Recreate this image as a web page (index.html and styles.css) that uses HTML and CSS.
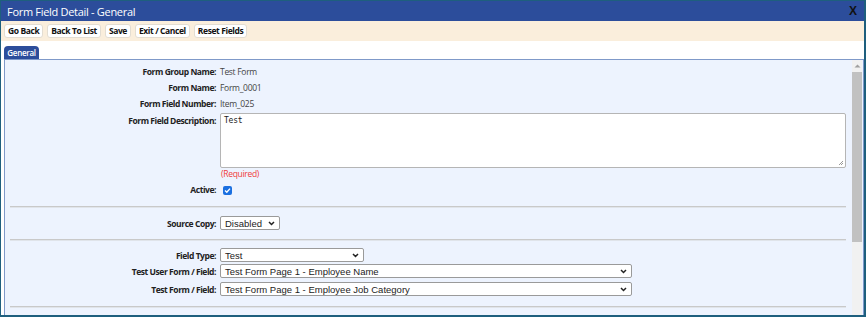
FILE: index.html
```html
<!DOCTYPE html>
<html>
<head>
<meta charset="utf-8">
<link rel="stylesheet" href="styles.css">
</head>
<body>
<div class="window">
  <div class="titlebar">
    <span class="title">Form Field Detail - General</span>
    <span class="close">X</span>
  </div>
  <div class="toolbar">
    <button class="btn">Go Back</button>
    <button class="btn">Back To List</button>
    <button class="btn">Save</button>
    <button class="btn">Exit / Cancel</button>
    <button class="btn">Reset Fields</button>
  </div>
  <div class="tabs">
    <span class="tab">General</span>
  </div>
  <div class="panel">
    <div class="content">
      <div class="row"><span class="label">Form Group Name:</span><span class="value">Test Form</span></div>
      <div class="row"><span class="label">Form Name:</span><span class="value">Form_0001</span></div>
      <div class="row"><span class="label">Form Field Number:</span><span class="value">Item_025</span></div>
      <div class="row row-top"><span class="label">Form Field Description:</span>
        <div class="value">
          <div class="textarea">Test<svg class="grip" width="6" height="6" viewBox="0 0 6 6"><path d="M5 1L1 5M5 3L3 5" stroke="#999" stroke-width="1"/></svg></div>
          <div class="required">(Required)</div>
        </div>
      </div>
      <div class="row row-active"><span class="label">Active:</span><span class="value"><span class="checkbox"><svg width="9" height="9" viewBox="0 0 9 9"><path d="M2 4.6L3.8 6.3L7 2.6" fill="none" stroke="#fff" stroke-width="1.4"/></svg></span></span></div>
      <div class="sep sep1"></div>
      <div class="row"><span class="label">Source Copy:</span><span class="value"><span class="select w-src">Disabled<svg class="chev" width="7" height="5" viewBox="0 0 7 5"><path d="M1 1L3.5 3.5L6 1" fill="none" stroke="#222" stroke-width="1.5"/></svg></span></span></div>
      <div class="sep sep2"></div>
      <div class="row"><span class="label">Field Type:</span><span class="value"><span class="select w-type">Test<svg class="chev" width="7" height="5" viewBox="0 0 7 5"><path d="M1 1L3.5 3.5L6 1" fill="none" stroke="#222" stroke-width="1.5"/></svg></span></span></div>
      <div class="row"><span class="label">Test User Form / Field:</span><span class="value"><span class="select w-long">Test Form Page 1 - Employee Name<svg class="chev" width="7" height="5" viewBox="0 0 7 5"><path d="M1 1L3.5 3.5L6 1" fill="none" stroke="#222" stroke-width="1.5"/></svg></span></span></div>
      <div class="row row-last"><span class="label">Test Form / Field:</span><span class="value"><span class="select w-long">Test Form Page 1 - Employee Job Category<svg class="chev" width="7" height="5" viewBox="0 0 7 5"><path d="M1 1L3.5 3.5L6 1" fill="none" stroke="#222" stroke-width="1.5"/></svg></span></span></div>
      <div class="sep sep3"></div>
    </div>
    <div class="scrollbar">
      <div class="arrow"><svg width="7" height="4" viewBox="0 0 7 4"><path d="M0.5 3.5L3.5 0.5L6.5 3.5Z" fill="#a0a0a0"/></svg></div>
      <div class="thumb"></div>
    </div>
  </div>
</div>
</body>
</html>
```
FILE: styles.css
```css
* { box-sizing: border-box; }
html, body { margin: 0; padding: 0; }
body {
  width: 866px;
  height: 317px;
  overflow: hidden;
  background: #ffffff;
  font-family: "Open Sans", "Noto Sans", sans-serif;
}
.window {
  width: 866px;
  height: 317px;
  border: 1px solid #1e5f7e;
  border-bottom-width: 2px;
  border-right-width: 2px;
  display: flex;
  flex-direction: column;
  overflow: hidden;
  background: #fff;
}
.titlebar {
  height: 20px;
  flex: none;
  background: #2c4d9b;
  display: flex;
  align-items: center;
  justify-content: space-between;
  padding: 0 7px 0 6px;
  color: #fff;
}
.title {
  font-size: 11px;
  letter-spacing: -0.3px;
}
.close {
  font-family: "Liberation Sans", sans-serif;
  font-weight: bold;
  color: #111;
  font-size: 12px;
}
.toolbar {
  height: 20px;
  flex: none;
  background: #faeedc;
  display: flex;
  align-items: center;
  gap: 4px;
  padding: 0 3px;
}
.btn {
  height: 14px;
  padding: 0 3px;
  background: #fff;
  border: 1px solid #e3ddd2;
  border-radius: 3px;
  font-family: "Open Sans", sans-serif;
  font-weight: 700;
  font-size: 8.5px;
  letter-spacing: -0.4px;
  color: #111;
  line-height: 12px;
}
.tabs {
  height: 18px;
  flex: none;
  display: flex;
  align-items: flex-end;
  padding-left: 3px;
}
.tab {
  width: 35px;
  height: 13px;
  background: #2c4d9b;
  color: #fff;
  border-radius: 4px 4px 0 0;
  font-size: 8px;
  font-weight: 600;
  letter-spacing: -0.3px;
  text-align: center;
  line-height: 13px;
}
.panel {
  flex: 1;
  margin-left: 3px;
  border-top: 1px solid #7f99c9;
  border-left: 1px solid #7f99c9;
  border-right: 1px solid #7f99c9;
  background: #edf3fe;
  display: flex;
  min-height: 0;
}
.content {
  flex: 1;
  padding-top: 3px;
}
.row {
  display: grid;
  grid-template-columns: 211px 1fr;
  column-gap: 4px;
  align-items: center;
  height: 16px;
}
.row-top {
  height: auto;
  align-items: start;
  margin-top: 2px;
}
.row-top .label { padding-top: 2px; }
.row-active { margin-top: 2px; }
.row-last { margin-top: 2px; }
.label {
  text-align: right;
  font-weight: 700;
  font-size: 8.5px;
  letter-spacing: -0.45px;
  color: #222;
  white-space: nowrap;
}
.value {
  font-size: 8.5px;
  letter-spacing: -0.3px;
  color: #444;
}
.textarea {
  position: relative;
  width: 626px;
  height: 55px;
  background: #fff;
  border: 1px solid #b5b5b5;
  border-radius: 2px;
  font-family: "DejaVu Sans Mono", monospace;
  font-size: 8px;
  letter-spacing: -0.2px;
  color: #222;
  padding: 2px 3px;
}
.grip {
  position: absolute;
  right: 1px;
  bottom: 1px;
}
.required {
  color: #f03a3a;
  font-size: 8.5px;
  letter-spacing: -0.3px;
  margin-left: 1px;
}
.checkbox {
  display: inline-flex;
  width: 9px;
  height: 9px;
  margin-left: 3px;
  background: #1a6fe0;
  border-radius: 2px;
  vertical-align: middle;
}
.sep {
  margin: 8px 6px 8px 5px;
  height: 2px;
  background: #c9c9c9;
  border-bottom: 1px solid #e0e4ea;
}
.sep1 { margin-top: 9px; margin-bottom: 7px; }
.sep2 { margin-top: 8px; margin-bottom: 6px; }
.sep3 { margin-top: 9px; }
.select {
  display: inline-flex;
  align-items: center;
  justify-content: space-between;
  height: 14px;
  background: #fff;
  border: 1px solid #9a9a9a;
  border-radius: 2px;
  padding: 0 4px 0 4px;
  font-family: "Liberation Sans", Arial, sans-serif;
  font-size: 9.5px;
  letter-spacing: 0;
  color: #222;
  vertical-align: middle;
}
.w-src { width: 60px; }
.w-type { width: 144px; }
.w-long { width: 412px; }
.scrollbar {
  width: 10px;
  flex: none;
  background: #f1f1f1;
  margin-right: 1px;
  display: flex;
  flex-direction: column;
}
.arrow {
  height: 11px;
  display: flex;
  align-items: center;
  justify-content: center;
}
.thumb {
  height: 170px;
  margin: 1px 0 0 0;
  background: #c1c1c1;
}
```
